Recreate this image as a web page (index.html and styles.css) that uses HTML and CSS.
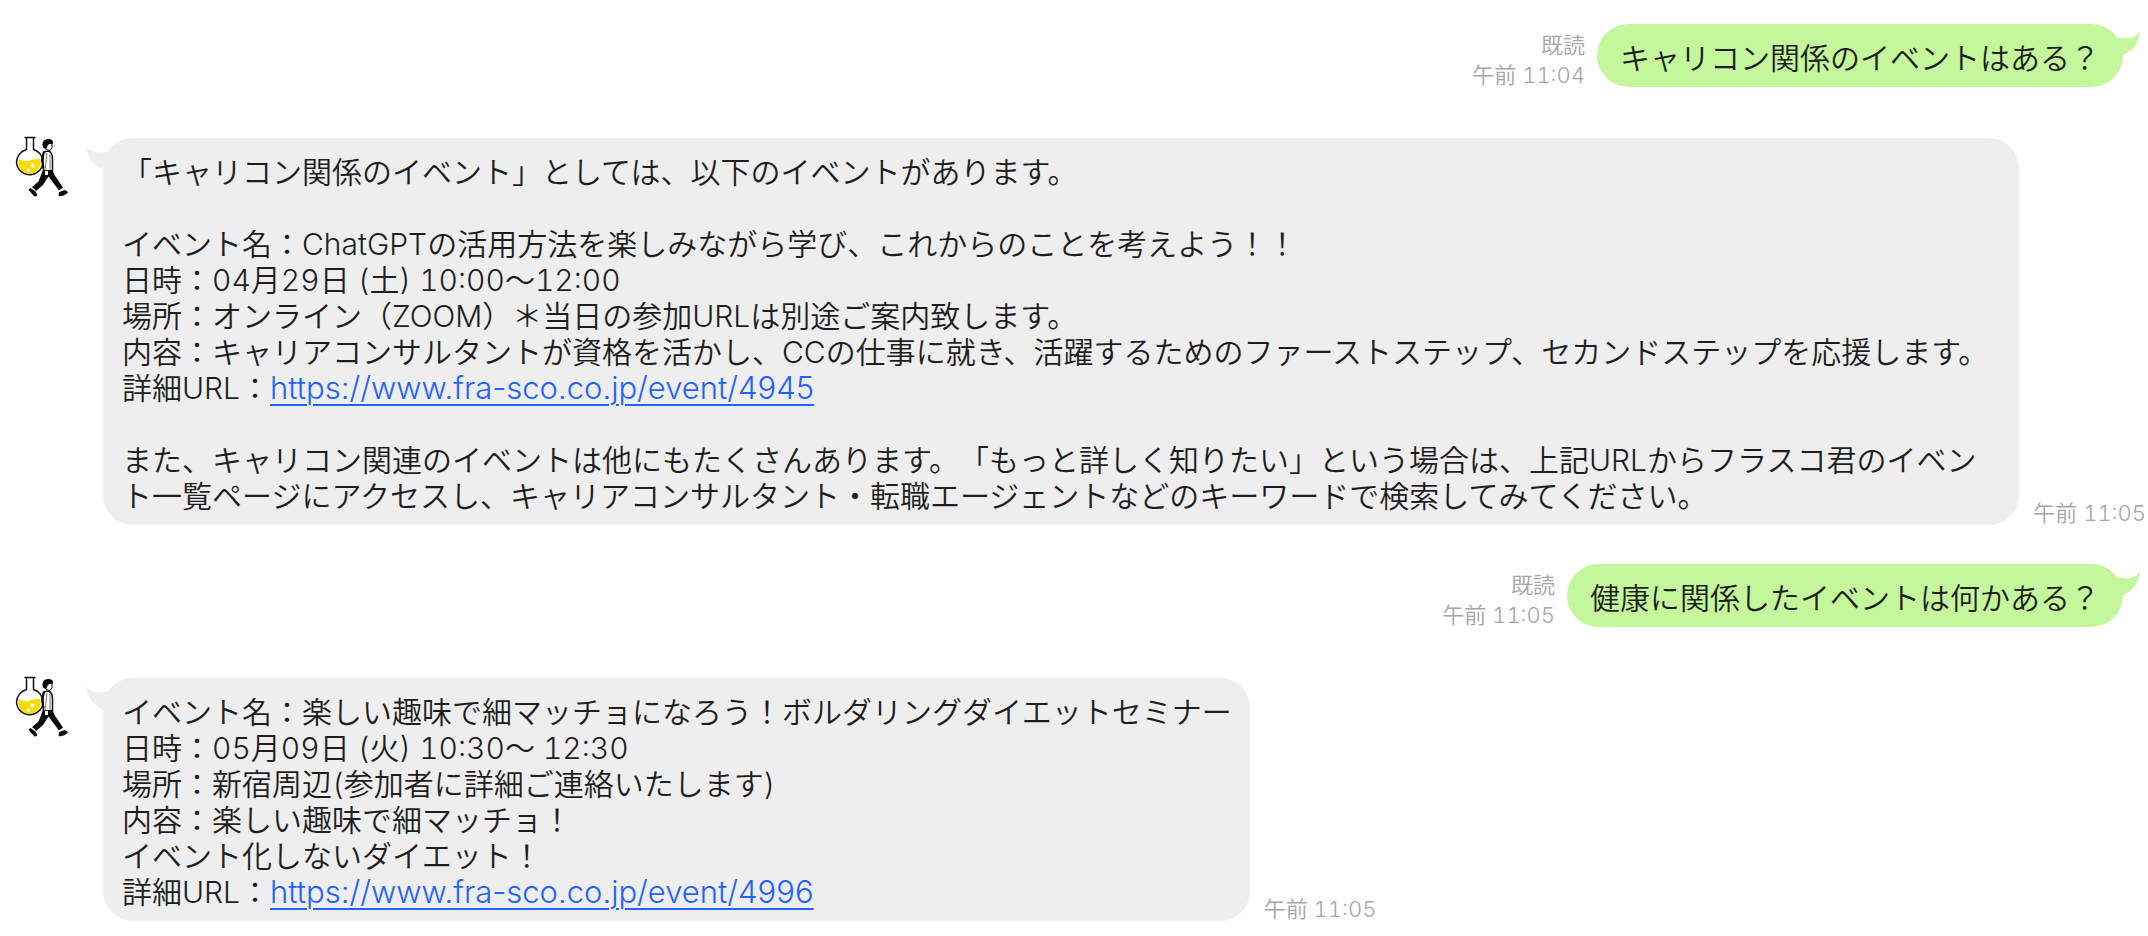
FILE: index.html
```
<!DOCTYPE html>
<html lang="ja">
<head>
    <meta charset="UTF-8">
    <meta name="viewport" content="width=device-width, initial-scale=1.0">
    <title>フラスコ君</title>
    <link rel="stylesheet" href="styles.css">
</head>
<body>
    <!-- Shared shapes -->
    <svg class="sprite" aria-hidden="true">
        <symbol id="flask-man" viewBox="0 0 56 64">
            <!-- flask -->
            <path d="M11 2.500h10M12.500 3v11.500C7 16 2.500 21 2.500 27.500a13.300 13.300 0 0 0 26.500 0C29 21 25 16 19.500 14.500V3" fill="#fff" stroke="#111" stroke-width="1.500" stroke-linejoin="round" stroke-linecap="round"/>
            <path d="M4.500 25c3-1 4 1.500 9 1 5-.5 8-3 13-1.500 1.300 8-4 14.500-10.800 14.500S3.500 33 4.500 25z" fill="#f7dc00"/>
            <circle cx="18.500" cy="30.500" r="2" fill="#fff"/>
            <circle cx="14.500" cy="35" r="1.800" fill="#fff"/>
            <!-- trousers and shoes -->
            <path d="M29 35h9.500l2 5 8.500 12.500-4 3-10.500-14-5.500 8.500-7 6-4-4 6.500-5.500z" fill="#080808"/>
            <path d="M16 53l-1.500 2 5.500 6c1.500 1 4 0 3-2l-3-5zM45 57l-.5 4c4 1 8.500-2 9.500-4l-3-2-3 1z" fill="#080808"/>
            <path d="M17 52.500l4 3M44.500 56.500l4-2" stroke="#fff" stroke-width="1.200"/>
            <!-- shirt -->
            <path d="M29.500 17l5-1c3 1 4 4 4 8V35.500l-9 .5-.5-10z" fill="#fff" stroke="#111" stroke-width="1.500"/>
            <path d="M33 18l-2 17M36 19v16" stroke="#777" stroke-width="1"/>
            <path d="M30 17l-2 8 1.500 8" fill="none" stroke="#080808" stroke-width="2"/>
            <path d="M31 36h3v4h-3z" fill="#fff"/>
            <!-- head -->
            <path d="M31 8h7v5l-2 2.500-4-1z" fill="#fff" stroke="#111" stroke-width="1"/>
            <path d="M29.500 13c-2.500-5 0-9 4.500-9 3 0 5.500 1 5 4.500-2 .5-4 0-5 1.500l-2 4z" fill="#080808"/>
        </symbol>
        <symbol id="tail" viewBox="0 0 36 24">
            <path d="M0 0c3 6 10 8.500 19 7L36 6v18H17C7 20 1 12 0 0z" fill="currentColor"/>
        </symbol>
    </svg>

    <main class="chat">
        <div class="message sent">
            <div class="meta">
                <span>既読</span>
                <time>午前 11:04</time>
            </div>
            <div class="bubble">
                <svg class="tail"><use href="#tail"/></svg>
                <p>キャリコン関係のイベントはある？</p>
            </div>
        </div>

        <div class="message received">
            <svg class="avatar" role="img" aria-label="フラスコ君"><use href="#flask-man"/></svg>
            <div class="bubble">
                <svg class="tail"><use href="#tail"/></svg>
                <p>「キャリコン関係のイベント」としては、以下のイベントがあります。</p>
                <br>
                <p>イベント名：ChatGPTの活用方法を楽しみながら学び、これからのことを考えよう！！</p>
                <p>日時：04月29日 (土) 10:00〜12:00</p>
                <p>場所：オンライン（ZOOM）＊当日の参加URLは別途ご案内致します。</p>
                <p>内容：キャリアコンサルタントが資格を活かし、CCの仕事に就き、活躍するためのファーストステップ、セカンドステップを応援します。</p>
                <p>詳細URL：<a href="https://www.fra-sco.co.jp/event/4945">https://www.fra-sco.co.jp/event/4945</a></p>
                <br>
                <p>また、キャリコン関連のイベントは他にもたくさんあります。「もっと詳しく知りたい」という場合は、上記URLからフラスコ君のイベント一覧ページにアクセスし、キャリアコンサルタント・転職エージェントなどのキーワードで検索してみてください。</p>
            </div>
            <div class="meta">
                <time>午前 11:05</time>
            </div>
        </div>

        <div class="message sent">
            <div class="meta">
                <span>既読</span>
                <time>午前 11:05</time>
            </div>
            <div class="bubble">
                <svg class="tail"><use href="#tail"/></svg>
                <p>健康に関係したイベントは何かある？</p>
            </div>
        </div>

        <div class="message received">
            <svg class="avatar" role="img" aria-label="フラスコ君"><use href="#flask-man"/></svg>
            <div class="bubble">
                <svg class="tail"><use href="#tail"/></svg>
                <p>イベント名：楽しい趣味で細マッチョになろう！ボルダリングダイエットセミナー</p>
                <p>日時：05月09日 (火) 10:30〜 12:30</p>
                <p>場所：新宿周辺(参加者に詳細ご連絡いたします)</p>
                <p>内容：楽しい趣味で細マッチョ！</p>
                <p>イベント化しないダイエット！</p>
                <p>詳細URL：<a href="https://www.fra-sco.co.jp/event/4996">https://www.fra-sco.co.jp/event/4996</a></p>
            </div>
            <div class="meta">
                <time>午前 11:05</time>
            </div>
        </div>
    </main>
</body>
</html>
```
FILE: styles.css
```
:root {
    --green: #c4f69b;
    --gray: #eeeeee;
    --text: #1e1e1e;
    --meta: #a6a6a6;
    --link: #1f62ff;
}

* {
    box-sizing: border-box;
}

body {
    margin: 0;
    background: #fff;
    color: var(--text);
    font-family: Inter, "Noto Sans CJK JP", sans-serif;
    font-size: 30px;
    font-weight: 350;
    font-variant-numeric: tabular-nums;
    line-height: 36px;
    text-spacing-trim: space-all;
}

p {
    margin: 0;
}

.sprite {
    display: none;
}

.chat {
    padding-top: 24px;
}

.message {
    display: flex;
    align-items: flex-end;
}

.sent {
    justify-content: flex-end;
    padding-right: 25px;
    margin-bottom: 51px;
}

.received {
    padding: 0 2px 0 14px;
    margin-bottom: 39px;
}

.bubble {
    position: relative;
    padding: 16px 19px 11px;
    border-radius: 30px;
    line-break: loose;
}

.sent .bubble {
    padding: 16px 23px 11px;
    border-radius: 32px;
    background: var(--green);
}

.received .bubble {
    background: var(--gray);
}

.tail {
    position: absolute;
    top: 7px;
    left: -17px;
    width: 36px;
    height: 24px;
    color: var(--gray);
}

.sent .tail {
    left: auto;
    right: -17px;
    color: var(--green);
    transform: scaleX(-1);
}

.avatar {
    flex: none;
    align-self: flex-start;
    width: 56px;
    height: 64px;
    margin: -3px 33px 0 0;
}

.meta {
    flex: none;
    display: flex;
    flex-direction: column;
    margin-bottom: -3px;
    color: var(--meta);
    font-size: 22px;
    line-height: 30px;
}

.sent .meta {
    align-items: flex-end;
    margin-right: 12px;
}

.received .meta {
    margin-left: 14px;
}

.received .bubble {
    padding-right: 18px;
}

a {
    color: var(--link);
    font-size: 31px;
    font-variant-numeric: normal;
    line-height: 1;
    text-decoration-thickness: 2px;
    text-underline-offset: 5px;
}
```
